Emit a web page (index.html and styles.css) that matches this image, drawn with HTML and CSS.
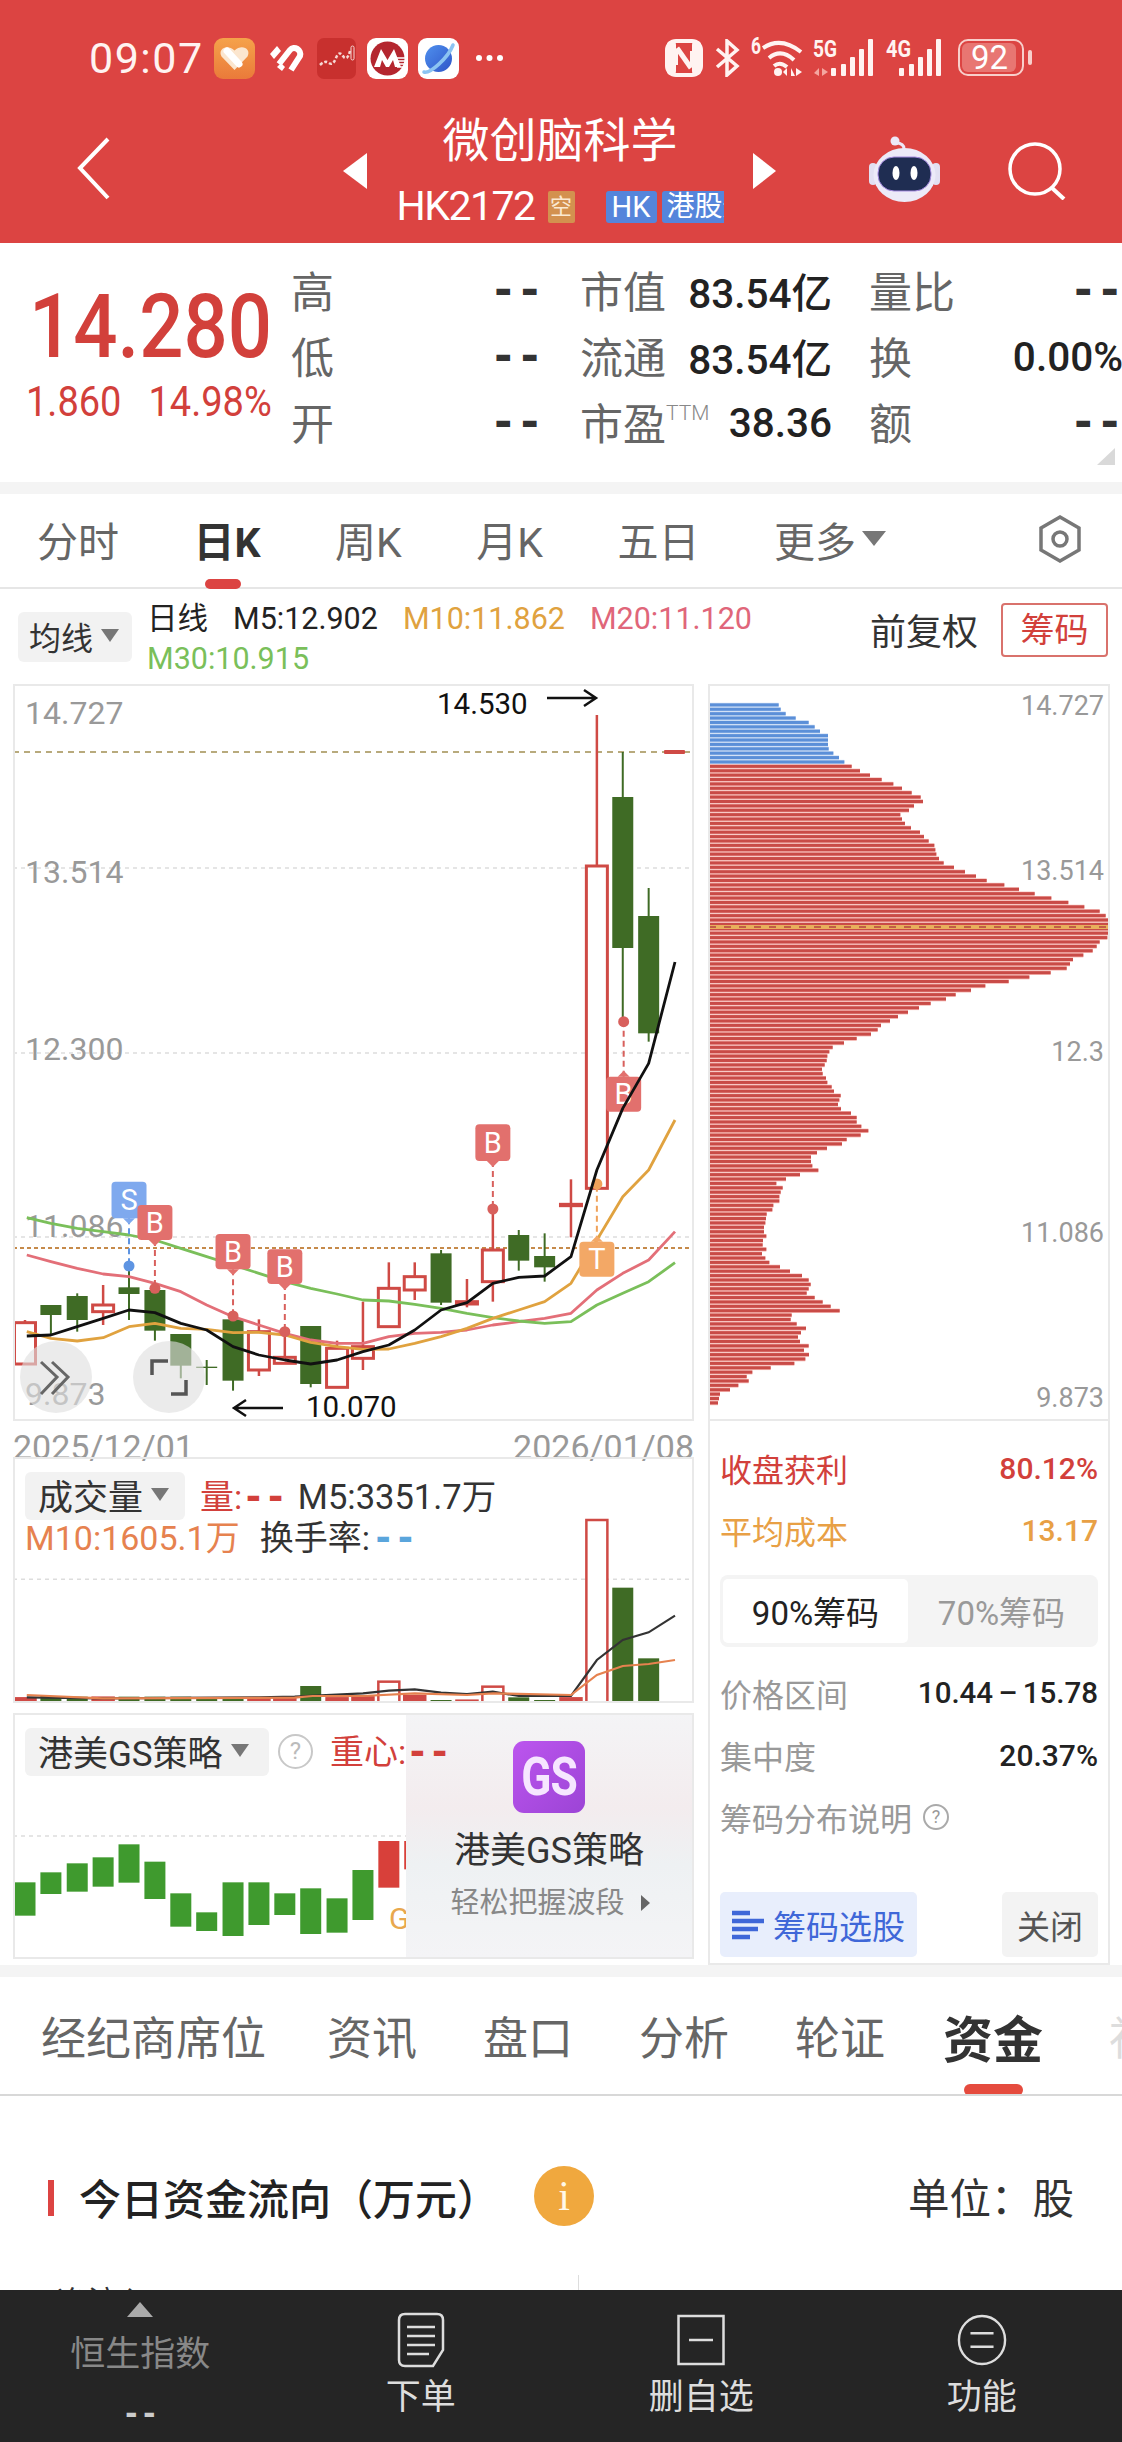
FILE: index.html
```html
<!DOCTYPE html>
<html lang="zh">
<head>
<meta charset="utf-8">
<title>微创脑科学</title>
<link rel="stylesheet" href="styles.css">
</head>
<body>
<div class="page">
  <header class="hero">
    <div class="status">
      <span class="time">09:07</span>
      <svg class="tile t1" viewBox="0 0 41 41"><defs><linearGradient id="og" x1="0" y1="0" x2="0" y2="1"><stop offset="0" stop-color="#F5A24A"/><stop offset="1" stop-color="#EA7A3A"/></linearGradient></defs><rect width="41" height="41" rx="9" fill="url(#og)"/><path d="M20.5 32L7.5 18.500C3.500 11 13 5.500 20.500 12.500C28 5.500 37.500 11 33.500 18.500Z" fill="#FBE6CF"/><path d="M13 13L25 26" stroke="#fff" stroke-width="7" stroke-linecap="round"/></svg>
      <svg class="logo2" viewBox="0 0 36 30"><path d="M2 11L9 3L13 8L6 16Z" fill="#fff"/><path d="M11 21L22 7C26 2 34 7 32 13L23 27" fill="none" stroke="#fff" stroke-width="6"/><path d="M9 24L13 20L17 24L14 28Z" fill="#fff"/></svg>
      <svg class="tile t3" viewBox="0 0 39 41"><rect width="39" height="41" rx="7" fill="#C8302E"/><path d="M3 27Q8 22 12 25T19 20T26 18T33 13" fill="none" stroke="#F6D8D4" stroke-width="2.500" stroke-dasharray="3 2"/><rect x="34" y="8" width="3" height="14" rx="1.500" fill="none" stroke="#F6D8D4"/></svg>
      <svg class="tile t4" viewBox="0 0 41 41"><rect width="41" height="41" rx="9" fill="#fff"/><circle cx="20.500" cy="20.500" r="17" fill="#B4262F"/><path d="M7 29L14 11L20.500 22L27 11L34 29H28L26 22L22 29H19L15 22L13 29Z" fill="#fff"/><path d="M30 20H39M30 23H39M30 26H38M30 29H37" stroke="#fff" stroke-width="1.500"/></svg>
      <svg class="tile t5" viewBox="0 0 41 41"><defs><linearGradient id="bg" x1="0" y1="0" x2="1" y2="1"><stop offset="0" stop-color="#4F90EE"/><stop offset="1" stop-color="#2F55C8"/></linearGradient></defs><rect width="41" height="41" rx="9" fill="#fff"/><circle cx="20.500" cy="20.500" r="13.500" fill="url(#bg)"/><path d="M6 34C12 36 30 20 35 7" fill="none" stroke="#8CC4F2" stroke-width="3.500" stroke-linecap="round"/></svg>
      <svg class="dots" viewBox="0 0 29 8"><circle cx="4" cy="4" r="3" fill="#fff"/><circle cx="14.500" cy="4" r="3" fill="#fff"/><circle cx="25" cy="4" r="3" fill="#fff"/></svg>
      <div class="status-right">
        <svg class="nfc" viewBox="0 0 38 38"><rect x="2" y="2" width="34" height="34" rx="9" fill="none" stroke="#FFF3F1" stroke-width="4"/><rect x="2" y="2" width="9" height="34" rx="4" fill="#FFF3F1"/><rect x="27" y="2" width="9" height="34" rx="4" fill="#FFF3F1"/><path d="M12 9L26 29" stroke="#FFF3F1" stroke-width="5"/><path d="M12 11V26M26 12V27" stroke="#FFF3F1" stroke-width="2"/></svg>
        <svg class="bt" viewBox="0 0 25 38"><path d="M2 10L22 27L12 36V2L22 11L2 28" fill="none" stroke="#FFF3F1" stroke-width="3.500"/></svg>
        <svg class="wifi" viewBox="0 0 52 39"><text class="sig-txt" x="0" y="17" textLength="10" lengthAdjust="spacingAndGlyphs">6</text><path d="M12 11Q30 -1 50 15M18 21Q30 11 43 23M23 29Q29 24 36 30" fill="none" stroke="#FFF3F1" stroke-width="4"/><circle cx="27" cy="35" r="4" fill="#FFF3F1"/><path d="M36 39V31L32 35ZM40 31L44 39H40ZM45 31V39L51 35Z" fill="#FFF3F1"/></svg>
        <svg class="sig s5" viewBox="0 0 61 39"><text class="sig-txt" x="0" y="19" textLength="24" lengthAdjust="spacingAndGlyphs">5G</text><path d="M1 35L6 30V38ZM9 30V38L15 34Z" fill="#F4A6A0"/><rect x="18" y="30" width="5" height="8" rx="1" fill="#FFF3F1"/><rect x="28" y="26" width="5" height="12" rx="1" fill="#FFF3F1"/><rect x="37" y="19" width="5" height="19" rx="1" fill="#FFF3F1"/><rect x="46" y="11" width="5" height="27" rx="1" fill="#FFF3F1"/><rect x="55" y="1" width="5" height="37" rx="1" fill="#FFF3F1"/></svg>
        <svg class="sig s4" viewBox="0 0 56 39"><text class="sig-txt" x="0" y="19" textLength="25" lengthAdjust="spacingAndGlyphs">4G</text><rect x="13" y="30" width="5" height="8" rx="1" fill="#FFF3F1"/><rect x="23" y="26" width="5" height="12" rx="1" fill="#FFF3F1"/><rect x="32" y="19" width="5" height="19" rx="1" fill="#FFF3F1"/><rect x="41" y="11" width="5" height="27" rx="1" fill="#FFF3F1"/><rect x="50" y="1" width="5" height="37" rx="1" fill="#FFF3F1"/></svg>
        <svg class="batt" viewBox="0 0 74 37"><rect x="1" y="1" width="64" height="35" rx="9" fill="none" stroke="#F8CFCB" stroke-width="2"/><rect x="4" y="4" width="54" height="29" rx="6" fill="#E87672"/><text class="batt-txt" x="13" y="30" textLength="37" lengthAdjust="spacingAndGlyphs">92</text><rect x="70" y="11" width="4" height="15" rx="2" fill="#F8CFCB"/></svg>
      </div>
    </div>
    <div class="nav">
      <svg class="back" viewBox="0 0 34 63"><path d="M31 2L3 31L31 61" fill="none" stroke="#fff" stroke-width="4"/></svg>
      <span class="tri tri-l"></span>
      <div class="nav-center">
        <div class="nav-title">微创脑科学</div>
        <div class="nav-sub"><span class="code">HK2172</span><span class="tag-k">空</span><span class="tag-hk">HK</span><span class="tag-gg">港股通</span></div>
      </div>
      <span class="tri tri-r"></span>
      <svg class="robot" viewBox="0 0 71 67"><path d="M35 14C35 9 31 8 27 8" fill="none" stroke="#EDE8F8" stroke-width="3"/><circle cx="26" cy="6" r="4.500" fill="#EDE8F8"/><rect x="0" y="28" width="8" height="22" rx="4" fill="#E2E0F2"/><rect x="63" y="28" width="8" height="22" rx="4" fill="#E2E0F2"/><ellipse cx="35.500" cy="40" rx="31" ry="27" fill="#ECEAF8"/><rect x="9" y="22" width="53" height="34" rx="16" fill="#1F2D52" stroke="#A58BE0" stroke-width="1"/><ellipse cx="27" cy="38" rx="3.500" ry="7" fill="#fff"/><ellipse cx="45" cy="38" rx="3.500" ry="7" fill="#fff"/></svg>
      <svg class="search" viewBox="0 0 58 58"><circle cx="27" cy="27" r="25" fill="none" stroke="#fff" stroke-width="3.500"/><path d="M44 46L56 57" stroke="#fff" stroke-width="4"/></svg>
    </div>
  </header>

  <section class="quote">
    <div class="price-block">
      <div class="price"><span>14.280</span></div>
      <div class="change"><span>1.860</span><span>14.98%</span></div>
    </div>
    <div class="q-col c1">
      <div class="q-row"><span class="q-l">高</span><span class="q-v dash">--</span></div>
      <div class="q-row"><span class="q-l">低</span><span class="q-v dash">--</span></div>
      <div class="q-row"><span class="q-l">开</span><span class="q-v dash">--</span></div>
    </div>
    <div class="q-col c2">
      <div class="q-row"><span class="q-l">市值</span><span class="q-v">83.54亿</span></div>
      <div class="q-row"><span class="q-l">流通</span><span class="q-v">83.54亿</span></div>
      <div class="q-row"><span class="q-l">市盈<sup class="ttm">TTM</sup></span><span class="q-v">38.36</span></div>
    </div>
    <div class="q-col c3">
      <div class="q-row"><span class="q-l">量比</span><span class="q-v dash">--</span></div>
      <div class="q-row"><span class="q-l">换</span><span class="q-v over">0.00%</span></div>
      <div class="q-row"><span class="q-l">额</span><span class="q-v dash">--</span></div>
    </div>
    <span class="corner"></span>
  </section>
  <div class="strip"></div>

  <nav class="periods">
    <span class="period">分时</span>
    <span class="period active">日K</span>
    <span class="period">周K</span>
    <span class="period">月K</span>
    <span class="period">五日</span>
    <span class="period">更多<i class="caret"></i></span>
    <svg class="gear" viewBox="0 0 52 52"><path d="M26 4L45 15V37L26 48L7 37V15Z" fill="none" stroke="#777" stroke-width="3.500"/><circle cx="26" cy="26" r="7" fill="none" stroke="#777" stroke-width="3.500"/></svg>
  </nav>

  <div class="ma-row">
    <div class="select ma-sel">均线<i class="caret"></i></div>
    <div class="legend">
      <span class="leg-k">日线</span>
      <span class="leg-k">M5:12.902</span>
      <span class="leg-o">M10:11.862</span>
      <span class="leg-p">M20:11.120</span>
      <span class="leg-g">M30:10.915</span>
    </div>
    <span class="fq">前复权</span>
    <span class="chip-btn">筹码</span>
  </div>

  <div class="panels">
    <div class="left-col">
      <div class="frame main-chart"><svg id="main" viewBox="13 684 681 737"></svg></div>
      <div class="dates"><span>2025/12/01</span><span>2026/01/08</span></div>
      <div class="frame vol">
        <svg id="vol" viewBox="13 1457 681 246"></svg>
        <div class="ind-head">
          <div class="select vol-sel">成交量<i class="caret"></i></div>
          <span class="c-red">量:<b class="d-in">--</b></span>
          <span class="c-dark m5">M5:3351.7万</span>
        </div>
        <div class="ind-sub"><span class="c-orange">M10:1605.1万</span><span class="c-dark hs">换手率:<b class="d-in c-blue">--</b></span></div>
      </div>
      <div class="frame gs">
        <svg id="gs" viewBox="13 1713 681 246"></svg>
        <div class="gs-over">
          <div class="gs-icon"><span>GS</span></div>
          <div class="gs-name">港美GS策略</div>
          <div class="gs-desc">轻松把握波段<i class="mini-tri"></i></div>
        </div>
        <div class="ind-head gs-head">
          <div class="select gs-sel">港美GS策略<i class="caret"></i></div>
          <span class="qm">?</span>
          <span class="c-red">重心:<b class="d-in">--</b></span>
        </div>
      </div>
    </div>
    <div class="right-col">
      <div class="frame chips-chart"><svg id="chips" viewBox="708 684 402 737"></svg></div>
      <div class="chips-info">
        <div class="ci-row c-red"><span>收盘获利</span><b>80.12%</b></div>
        <div class="ci-row c-amber"><span>平均成本</span><b>13.17</b></div>
        <div class="toggle"><span class="tg on">90%筹码</span><span class="tg">70%筹码</span></div>
        <div class="ci-row"><span class="c-gray">价格区间</span><b class="range">10.44 – 15.78</b></div>
        <div class="ci-row"><span class="c-gray">集中度</span><b>20.37%</b></div>
        <div class="ci-row start"><span class="c-gray">筹码分布说明</span><span class="qm small">?</span></div>
        <div class="ci-actions">
          <span class="pick"><svg class="pick-ic" viewBox="0 0 32 30"><path d="M0 3H18M0 11H32M0 19H26M0 27H18" stroke="#3F67D8" stroke-width="4.500"/></svg>筹码选股</span>
          <span class="close">关闭</span>
        </div>
      </div>
    </div>
  </div>
  <div class="strip low"></div>

  <nav class="info-tabs">
    <span class="first">经纪商席位</span><span>资讯</span><span>盘口</span><span>分析</span><span>轮证</span><span class="active">资金</span><span class="fade">社区</span>
  </nav>

  <main class="flow">
    <div class="sec-title">
      <i class="sec-bar"></i>
      <h2>今日资金流向（万元）</h2>
      <span class="info-i">i</span>
      <span class="unit">单位：股</span>
    </div>
    <div class="cut-row"><span class="cut-l">净流入</span><i class="cut-v"></i></div>
  </main>

  <footer class="bar">
    <div class="bar-item idx"><i class="up"></i><span class="idx-name">恒生指数</span><span class="idx-val">--</span></div>
    <div class="bar-item"><svg class="bar-ic" viewBox="0 0 48 56"><path d="M8 2H40Q46 2 46 8V38L36 54H8Q2 54 2 48V8Q2 2 8 2Z" fill="none" stroke="#ddd" stroke-width="2.500"/><path d="M10 15H38M10 24H38M10 33H38M10 42H32" stroke="#ddd" stroke-width="2.500"/></svg><span>下单</span></div>
    <div class="bar-item"><svg class="bar-ic" viewBox="0 0 48 56"><rect x="1.500" y="4" width="45" height="48" fill="none" stroke="#ddd" stroke-width="2.500"/><path d="M12 28H36" stroke="#ddd" stroke-width="2.500"/></svg><span>删自选</span></div>
    <div class="bar-item"><svg class="bar-ic" viewBox="0 0 52 56"><ellipse cx="26" cy="28" rx="24" ry="25" fill="none" stroke="#ddd" stroke-width="2.500"/><path d="M14 21H38M14 35H38" stroke="#ddd" stroke-width="2.500"/></svg><span>功能</span></div>
  </footer>
</div>
<script src="app.js"></script>
</body>
</html>
```

FILE: styles.css
```css
* { box-sizing: border-box; }
html, body { margin: 0; padding: 0; background: #fff; }
body { font-family: Roboto, "Noto Sans CJK SC", sans-serif; color: #222; }
i { font-style: normal; }
.page { width: 1122px; height: 2442px; overflow: hidden; display: flex; flex-direction: column; position: relative; }

/* header */
.hero { height: 243px; background: #DC4442; color: #fff; flex: none; }
.status { height: 118px; display: flex; align-items: flex-start; padding: 38px 90px 0 89px; }
.time { font-size: 43px; line-height: 41px; width: 114px; letter-spacing: 1.500px; color: #FFF3F1; }
.tile { width: 41px; height: 41px; display: block; flex: none; }
.t1 { margin-left: 11px; }
.logo2 { width: 36px; height: 30px; margin: 5px 0 0 13px; flex: none; }
.t3 { width: 39px; margin-left: 13px; }
.t4 { margin-left: 11px; }
.t5 { margin-left: 10px; }
.dots { width: 29px; height: 8px; margin: 16px 0 0 16px; }
.status-right { margin-left: auto; display: flex; align-items: flex-start; margin-top: -1px; }
.nfc { width: 38px; height: 38px; margin-top: 2px; }
.bt { width: 25px; height: 38px; margin: 2px 0 0 12px; }
.wifi { width: 52px; height: 39px; margin-left: 11px; overflow: visible; }
.sig { height: 39px; overflow: visible; margin-top: 1px; }
.s5 { width: 61px; margin-left: 10px; }
.s4 { width: 56px; margin-left: 12px; }
.sig-txt { font: 700 24px Roboto, sans-serif; fill: #FFF3F1; }
.batt { width: 74px; height: 37px; margin: 2px 0 0 16px; }
.batt-txt { font: 400 34px Roboto, sans-serif; fill: #fff; text-anchor: start; }
.nav { height: 125px; display: flex; align-items: flex-start; padding-left: 77px; }
.back { width: 34px; height: 63px; margin-top: 19px; flex: none; }
.tri { width: 0; height: 0; border-top: 18px solid transparent; border-bottom: 18px solid transparent; margin-top: 35px; flex: none; }
.tri-l { border-right: 24px solid #fff; margin-left: 232px; }
.tri-r { border-left: 23px solid #fff; }
.nav-center { width: 386px; display: flex; flex-direction: column; align-items: center; }
.nav-title { font-size: 47px; line-height: 46px; white-space: nowrap; }
.nav-sub { display: flex; align-items: center; margin-top: 26px; height: 33px; }
.code { font-size: 41px; line-height: 33px; letter-spacing: -1.500px; width: 151px; }
.tag-k { width: 27px; height: 32px; background: #D3914F; font-size: 22px; line-height: 32px; text-align: center; border-radius: 2px; color: #FBE9D2; }
.tag-hk { width: 51px; height: 32px; margin-left: 31px; background: #5585DB; font-size: 29px; line-height: 32px; text-align: center; border-radius: 3px; }
.tag-gg { width: 62px; height: 32px; margin-left: 5px; background: #5585DB; font-size: 28px; line-height: 32px; white-space: nowrap; overflow: hidden; padding-left: 5px; border-radius: 3px 0 0 3px; }
.robot { width: 71px; height: 67px; margin: 17px 0 0 93px; flex: none; }
.search { width: 58px; height: 58px; margin: 24px 0 0 68px; flex: none; }

/* quote */
.quote { height: 239px; flex: none; display: flex; position: relative; padding-top: 13px; }
.price-block { width: 292px; flex: none; }
.price { height: 106px; padding: 36px 0 0 29px; color: #D2403B; }
.price span { display: block; width: 270px; font-size: 89px; line-height: 70px; font-weight: 500; transform: scaleX(.875); transform-origin: left center; }
.change { display: flex; gap: 27px; padding-left: 26px; color: #D2403B; font-size: 38px; line-height: 40px; margin-top: 20px; }
.change span { display: block; transform: scaleY(1.1); }
.q-col { display: flex; flex-direction: column; }
.c1 { width: 248px; }
.c2 { width: 249px; margin-left: 41px; }
.c3 { width: 250px; margin-left: 40px; }
.q-row { height: 66px; display: flex; justify-content: space-between; align-items: center; }
.q-l { font-size: 43px; color: #666; white-space: nowrap; position: relative; margin-left: -1px; }
.q-v { font-size: 40.500px; font-weight: 500; color: #222; white-space: nowrap; margin-top: 3px; margin-right: -2px; }
.q-v.dash { font-family: "DejaVu Sans Mono", monospace; font-size: 44px; font-weight: 700; margin-top: 0; margin-right: -3px; color: #333; }
.q-v.over { margin-right: -3px; }
.ttm { font-size: 21px; color: #888; font-weight: 300; vertical-align: 20px; line-height: 0; }
.corner { position: absolute; right: 7px; bottom: 17px; width: 0; height: 0; border-left: 18px solid transparent; border-bottom: 17px solid #D9D9D9; }
.strip { height: 12px; background: #F4F4F4; flex: none; }

/* periods */
.periods { height: 95px; flex: none; display: flex; align-items: center; gap: 74.500px; padding: 0 36px 4px 37px; border-bottom: 2px solid #E6E6E6; position: relative; }
.period { font-size: 41px; color: #666; position: relative; display: flex; align-items: center; white-space: nowrap; }
.period.active { font-weight: 700; color: #333; }
.period.active::after { content: ""; position: absolute; left: 11px; top: 70px; width: 36px; height: 10px; border-radius: 5px; background: #DC4442; }
.period .caret { border-left-width: 12px; border-right-width: 12px; border-top-width: 15px; margin-left: 6px; }
.caret { display: inline-block; width: 0; height: 0; border-left: 9px solid transparent; border-right: 9px solid transparent; border-top: 13px solid #777; margin-left: 8px; }
.gear { width: 52px; height: 52px; margin-left: auto; flex: none; }

/* ma */
.ma-row { height: 95px; flex: none; display: flex; align-items: flex-start; padding: 10px 10px 0 18px; }
.select { display: flex; align-items: center; background: #F2F2F2; border-radius: 6px; color: #333; white-space: nowrap; flex: none; padding-bottom: 3px; }
.ma-sel { width: 114px; height: 50px; margin-top: 13px; padding-left: 11px; font-size: 32px; }
.legend { width: 640px; margin-left: 15px; display: flex; flex-wrap: wrap; column-gap: 25px; font-size: 30.500px; line-height: 40px; flex: none; }
.leg-k { color: #222; }
.leg-o { color: #E0A23F; }
.leg-p { color: #E0667A; }
.leg-g { color: #7ABF5A; }
.fq { font-size: 36px; line-height: 46px; margin-top: 11px; margin-left: 83px; color: #333; white-space: nowrap; }
.chip-btn { width: 107px; height: 54px; margin-left: 23px; margin-top: 4px; border: 2px solid #D9726C; border-radius: 4px; color: #D2403B; font-size: 34px; line-height: 50px; text-align: center; flex: none; }

/* panels */
.panels { display: flex; flex: none; padding-left: 13px; height: 1281px; }
.left-col { width: 681px; flex: none; }
.right-col { width: 402px; margin-left: 14px; flex: none; display: flex; flex-direction: column; }
.frame { border: 2px solid #E9E9E9; position: relative; overflow: hidden; }
.frame svg { display: block; width: calc(100% + 4px); height: calc(100% + 4px); position: absolute; left: -2px; top: -2px; }
.main-chart { height: 737px; }
.chips-chart { height: 737px; }
.dates { height: 36px; display: flex; justify-content: space-between; align-items: center; font-size: 34px; color: #999; padding-top: 15px; white-space: nowrap; }
.vol { height: 246px; }
.gs { height: 246px; margin-top: 10px; }
.ind-head { position: relative; display: flex; align-items: center; padding: 10px 0 0 10px; font-size: 34px; white-space: nowrap; }
.ind-head > span:not(.qm) { margin-bottom: 4px; }
.vol-sel { width: 160px; height: 48px; padding-left: 13px; font-size: 35px; margin-right: 15px; }
.d-in { font-family: "DejaVu Sans Mono", monospace; font-weight: 700; font-size: 37px; }
.c-red { color: #D2403B; }
.c-dark { color: #333; }
.c-orange { color: #E6824F; }
.c-blue { color: #5AA5DC; margin-left: 2px; }
.c-amber { color: #E8A045; }
.c-gray { color: #999; }
.m5 { margin-left: 11px; font-size: 34.500px; }
.ind-sub { position: relative; padding-left: 10px; font-size: 34px; line-height: 30px; white-space: nowrap; }
.hs { margin-left: 20px; }
.gs-head { z-index: 2; }
.gs-sel { width: 244px; height: 48px; padding-left: 13px; font-size: 35px; }
.qm { width: 35px; height: 35px; margin: 0 17px 0 9px; border: 2px solid #C8C8C8; border-radius: 50%; color: #BBB; font-size: 24px; line-height: 31px; text-align: center; flex: none; }
.gs-over { position: absolute; right: 0; top: 0; bottom: 0; width: 286px; background: linear-gradient(180deg,#F4F4F6 0,#F3ECEE 38%,#EEF1F3 62%,#F4F4F6 100%); display: flex; flex-direction: column; align-items: center; z-index: 1; }
.gs-icon { width: 72px; height: 72px; margin-top: 26px; border-radius: 11px; background: linear-gradient(135deg,#BC55EE,#9C44D6); color: #F6E6FF; line-height: 72px; font-weight: 700; text-align: center; }
.gs-icon span { display: inline-block; font-size: 54px; transform: scaleX(.82); letter-spacing: -1px; }
.gs-name { font-size: 36px; line-height: 42px; margin-top: 17px; color: #333; white-space: nowrap; }
.gs-desc { font-size: 29px; line-height: 34px; margin-top: 14px; color: #888; display: flex; align-items: center; white-space: nowrap; margin-left: 2px; }
.mini-tri { width: 0; height: 0; margin-left: 16px; border-top: 8px solid transparent; border-bottom: 8px solid transparent; border-left: 9px solid #666; }

/* chips info */
.chips-info { flex: 1; border: 2px solid #E9E9E9; border-top: 0; padding: 16px 10px 0 10px; height: 544px; }
.ci-row { height: 62px; display: flex; justify-content: space-between; align-items: center; font-size: 32px; white-space: nowrap; }
.ci-row b { font-weight: 500; font-size: 30px; }
.ci-row b.range { word-spacing: -2px; font-size: 29.500px; }
.ci-row.start { justify-content: flex-start; }
.qm.small { width: 26px; height: 26px; font-size: 18px; line-height: 22px; margin: 0 0 0 11px; border-color: #AAA; color: #999; }
.toggle { height: 72px; margin: 14px 0 15px; background: #F4F4F4; border-radius: 8px; padding: 4px 3px; display: flex; font-size: 33px; color: #999; }
.tg { flex: 1; display: flex; align-items: center; justify-content: center; white-space: nowrap; }
.tg.on { flex: none; width: 185px; background: #fff; border-radius: 5px; color: #222; }
.ci-actions { margin-top: 44px; display: flex; justify-content: space-between; height: 65px; }
.pick { width: 197px; background: #E8EEFC; border-radius: 5px; color: #3F67D8; font-size: 33px; display: flex; align-items: center; padding-left: 12px; white-space: nowrap; }
.pick-ic { width: 32px; height: 30px; margin-right: 9px; flex: none; }
.close { width: 96px; background: #F3F3F3; border-radius: 5px; color: #555; font-size: 33px; display: flex; align-items: center; justify-content: center; }

/* info tabs */
.info-tabs { height: 119px; flex: none; display: flex; align-items: center; padding: 0 0 0 41px; gap: 66px; font-size: 45px; color: #666; white-space: nowrap; border-bottom: 2px solid #D8D8D8; position: relative; overflow: hidden; }
.info-tabs span { flex: none; }
.info-tabs .first { margin-right: -5px; }
.info-tabs .active { font-size: 50px; font-weight: 700; color: #333; position: relative; margin-left: -8px; }
.info-tabs .active::after { content: ""; position: absolute; left: 21px; top: 84px; width: 59px; height: 12px; background: #E54B3E; border-radius: 6px; }
.info-tabs .fade { color: #DDD; }

/* flow */
.flow { flex: 1; min-height: 0; overflow: hidden; padding-top: 70px; }
.sec-title { height: 60px; display: flex; align-items: center; padding: 0 48px; }
.sec-bar { width: 6px; height: 36px; background: #DC4442; flex: none; margin-top: 4px; }
h2 { margin: 0 0 0 25px; font-size: 42px; font-weight: 500; color: #222; white-space: nowrap; }
.info-i { width: 60px; height: 60px; margin-left: 35px; border-radius: 50%; background: #F0A83E; color: #FFF8E8; font: 400 42px/60px "Liberation Serif", serif; text-align: center; flex: none; }
.unit { margin-left: auto; font-size: 41.500px; color: #333; white-space: nowrap; }
.cut-row { margin-top: 49px; display: flex; padding-left: 57px; position: relative; }
.cut-l { font-size: 31px; line-height: 40px; margin-top: 8px; color: #333; }
.cut-v { position: absolute; left: 578px; top: 0; width: 1px; height: 40px; background: #DDD; }

/* bottom */
.bar { height: 152px; flex: none; background: #252525; display: grid; grid-template-columns: repeat(4, 1fr); color: #DDD; font-size: 35px; }
.bar-item { display: flex; flex-direction: column; align-items: center; padding-top: 22px; position: relative; white-space: nowrap; }
.bar-ic { width: 50px; height: 56px; flex: none; }
.bar-item span { line-height: 40px; margin-top: 10px; }
.up { width: 0; height: 0; border-left: 13px solid transparent; border-right: 13px solid transparent; border-bottom: 15px solid #AAA; margin-top: -10px; }
.idx .idx-name { font-size: 35px; color: #888; margin-top: 18px; line-height: 40px; }
.idx .idx-val { font-family: "DejaVu Sans Mono", monospace; font-weight: 700; color: #CCC; font-size: 30px; line-height: 30px; margin-top: 24px; }
```

FILE: app.js
```js
const NS = 'http://www.w3.org/2000/svg';
function el(parent, tag, attrs, text) {
  const n = document.createElementNS(NS, tag);
  for (const k in attrs) n.setAttribute(k, attrs[k]);
  if (text !== undefined) n.textContent = text;
  parent.appendChild(n);
  return n;
}
const RED = '#CF4A45', GREEN = '#3F6B25', FONT = 'Roboto, sans-serif';

/* ---------- main candlestick ---------- */
(function () {
  const s = document.getElementById('main');
  const X = z => z / 2.24, Y = z => z / 3 + 980;
  const grid = [868, 1053, 1237];
  grid.forEach(y => el(s, 'line', { x1: 13, x2: 693, y1: y, y2: y, stroke: '#DDD', 'stroke-width': 1.5, 'stroke-dasharray': '4 4' }));
  [['14.727', 724], ['13.514', 883], ['12.300', 1060], ['11.086', 1237], ['9.873', 1405]].forEach(l =>
    el(s, 'text', { x: 25, y: l[1], fill: '#999', 'font-size': 32, 'font-family': FONT }, l[0]));
  el(s, 'line', { x1: 13, x2: 693, y1: 752, y2: 752, stroke: '#B8AA7C', 'stroke-width': 2, 'stroke-dasharray': '6 5' });
  el(s, 'line', { x1: 13, x2: 693, y1: 1248, y2: 1248, stroke: '#C68A4A', 'stroke-width': 2, 'stroke-dasharray': '4 3' });
  el(s, 'rect', { x: 664, y: 750, width: 21, height: 4, fill: RED, rx: 1 });

  const c = [
    [56, 1028, 1152, 1020, 1152, 'r'], [114, 975, 1005, 975, 1068, 'g'], [173, 948, 1020, 940, 1055, 'g'],
    [231, 975, 995, 915, 1035, 'r'], [289, 922, 942, 860, 1020, 'g'], [347, 930, 1052, 930, 1082, 'g'],
    [405, 1062, 1157, 1062, 1195, 'g'], [463, 1160, 1164, 1140, 1215, 'g'], [522, 1018, 1202, 1018, 1232, 'g'],
    [580, 1055, 1170, 1018, 1188, 'r'], [638, 1132, 1150, 1055, 1150, 'r'], [696, 1038, 1212, 1038, 1222, 'g'],
    [755, 1105, 1222, 1082, 1222, 'r'], [813, 1100, 1135, 965, 1170, 'r'], [871, 925, 1040, 847, 1040, 'r'],
    [929, 890, 930, 847, 960, 'r'], [988, 820, 968, 810, 975, 'g'], [1046, 965, 972, 897, 982, 'r'],
    [1104, 810, 905, 690, 965, 'r'], [1162, 765, 842, 750, 872, 'g'], [1220, 828, 862, 760, 905, 'g'],
    [1279, 673, 677, 598, 772, 'r'], [1337, -342, 625, -795, 625, 'r'], [1395, -549, -96, -684, 125, 'g'],
    [1453, -192, 160, -276, 185, 'g']
  ];
  c.forEach(k => {
    const x = X(k[0]), col = k[5] === 'r' ? RED : GREEN;
    el(s, 'line', { x1: x, x2: x, y1: Y(k[3]), y2: Y(k[4]), stroke: col, 'stroke-width': k[5] === 'r' ? 2.5 : 2 });
    const h = Y(k[2]) - Y(k[1]);
    if (k[5] === 'r') el(s, 'rect', { x: x - 10.5, y: Y(k[1]), width: 21, height: h, fill: h < 4 ? RED : '#fff', stroke: RED, 'stroke-width': 3 });
    else el(s, 'rect', { x: x - 10.5, y: Y(k[1]), width: 21, height: h, fill: col });
  });

  const xs = [60, 114, 173, 231, 289, 347, 405, 463, 522, 580, 638, 696, 755, 813, 871, 929, 988, 1046, 1104, 1162, 1220, 1279, 1337, 1395, 1453, 1512];
  const poly = (ys, col) => el(s, 'polyline', { points: ys.map((y, i) => X(xs[i]) + ',' + Y(y)).join(' '), fill: 'none', stroke: col, 'stroke-width': 2.8, 'stroke-linejoin': 'round' });
  const m30 = [713, 730, 745, 755, 765, 780, 805, 830, 855, 880, 905, 925, 942, 960, 963, 973, 985, 1000, 1013, 1023, 1030, 1025, 975, 940, 905, 848];
  const m20 = [825, 845, 865, 882, 890, 910, 935, 975, 1010, 1035, 1060, 1080, 1090, 1090, 1070, 1060, 1057, 1050, 1035, 1025, 1015, 1000, 930, 880, 840, 755];
  const m10 = [1055, 1075, 1083, 1073, 1040, 1030, 1045, 1048, 1058, 1057, 1065, 1087, 1100, 1108, 1107, 1090, 1070, 1045, 1015, 990, 965, 910, 780, 650, 570, 420];
  const m5 = [1068, 1065, 1040, 1015, 990, 998, 1030, 1050, 1100, 1125, 1140, 1152, 1140, 1115, 1095, 1050, 990, 968, 910, 892, 888, 830, 570, 385, 250, -54];
  poly(m20, '#E36F78');
  poly(m30, '#7ABF5A');
  poly(m10, '#E0A23F');

  function tag(cx, top, bottom, letter, col, fill, dotY, up) {
    const x = X(cx), w = 35, t = Y(top), b = Y(bottom);
    const dashEnd = Y(dotY);
    el(s, 'line', { x1: x, x2: x, y1: up ? t : b, y2: dashEnd, stroke: col, 'stroke-width': 2, 'stroke-dasharray': '6 4' });
    el(s, 'circle', { cx: x, cy: dashEnd, r: 5.5, fill: col });
    if (up) el(s, 'path', { d: `M${x - 6} ${t}L${x} ${t - 6}L${x + 6} ${t}Z`, fill });
    else el(s, 'path', { d: `M${x - 6} ${b}L${x} ${b + 6}L${x + 6} ${b}Z`, fill });
    el(s, 'rect', { x: x - w / 2, y: t, width: w, height: b - t, rx: 4, fill });
    el(s, 'text', { x, y: (t + b) / 2 + 10, fill: '#fff', 'font-size': 29, 'text-anchor': 'middle', 'font-family': FONT }, letter);
  }
  const TR = '#E2706D';
  tag(289, 605, 715, 'S', '#5E94E2', '#7FA9EE', 858);
  tag(347, 675, 780, 'B', '#D8605C', TR, 925);
  tag(522, 762, 868, 'B', '#D8605C', TR, 1008);
  tag(638, 808, 912, 'B', '#D8605C', TR, 1055);
  tag(1104, 433, 543, 'B', '#D8605C', TR, 687);
  tag(1397, 290, 395, 'B', '#D8605C', TR, 125, true);
  tag(1337, 785, 890, 'T', '#EFA25A', '#F3A866', 612, true);
  poly(m5, '#111');

  el(s, 'text', { x: 437, y: 714, fill: '#111', 'font-size': 29.5, 'font-family': FONT }, '14.530');
  el(s, 'path', { d: 'M547 698H596M584 690L596 698L584 706', fill: 'none', stroke: '#111', 'stroke-width': 2.5 });
  el(s, 'text', { x: 306, y: 1417, fill: '#111', 'font-size': 29.5, 'font-family': FONT }, '10.070');
  el(s, 'path', { d: 'M283 1408H234M246 1400L234 1408L246 1416', fill: 'none', stroke: '#111', 'stroke-width': 2.5 });

  el(s, 'ellipse', { cx: 56, cy: 1377, rx: 36, ry: 36, fill: 'rgba(222,222,222,.62)' });
  el(s, 'path', { d: 'M41 1362L57 1377L41 1394M52 1362L68 1377L52 1394', fill: 'none', stroke: '#666', 'stroke-width': 3 });
  el(s, 'ellipse', { cx: 169, cy: 1377, rx: 36, ry: 36, fill: 'rgba(222,222,222,.62)' });
  el(s, 'path', { d: 'M152 1375V1361H168M186 1380V1394H171', fill: 'none', stroke: '#555', 'stroke-width': 3.5 });
})();

/* ---------- chip distribution ---------- */
(function () {
  const s = document.getElementById('chips');
  const w = [236, 242, 257, 287, 326, 344, 360, 384, 384, 384, 386, 400, 417, 433, 455, 480, 510, 545, 580, 606, 635, 662, 669, 642, 627, 601, 606, 615, 633, 660, 672, 686, 703, 706, 709, 717, 731, 762, 795, 828, 860, 913, 957, 1004, 1054, 1105, 1153, 1199, 1217, 1224, 1227, 1226, 1224, 1222, 1199, 1190, 1178, 1150, 1119, 1110, 1100, 1052, 988, 926, 856, 813, 767, 738, 692, 657, 624, 594, 570, 543, 533, 513, 470, 432, 398, 388, 382, 380, 374, 366, 368, 378, 382, 395, 402, 422, 418, 414, 423, 453, 470, 470, 484, 505, 482, 440, 426, 381, 351, 333, 333, 337, 355, 300, 258, 229, 248, 242, 238, 238, 220, 217, 200, 198, 196, 192, 192, 199, 189, 188, 199, 186, 196, 208, 240, 270, 306, 326, 332, 326, 320, 344, 368, 392, 419, 275, 272, 290, 318, 303, 294, 300, 326, 312, 327, 316, 283, 212, 157, 140, 146, 115, 90, 60, 57, 54];
  const P = 4.39, Y0 = 705;
  w.forEach((z, i) => {
    const y = Y0 + P * i, x2 = 700 + z / 3, blue = i < 14;
    el(s, 'rect', { x: 709, y: y - 2.2, width: x2 - 709, height: P, fill: blue ? '#C3D7F3' : '#F6B9B4' });
    el(s, 'rect', { x: 709, y: y - 1.6, width: x2 - 709, height: 3, fill: blue ? '#5B8FD8' : '#C94B47' });
  });
  el(s, 'rect', { x: 709, y: 925, width: 400, height: 4, fill: '#E8AF5C' });
  el(s, 'line', { x1: 709, x2: 1109, y1: 927, y2: 927, stroke: '#B5443F', 'stroke-width': 1.5, 'stroke-dasharray': '7 8' });
  [['14.727', 715], ['13.514', 880], ['12.3', 1061], ['11.086', 1242], ['9.873', 1407]].forEach(l =>
    el(s, 'text', { x: 1104, y: l[1], fill: '#999', 'font-size': 27, 'text-anchor': 'end', 'font-family': FONT }, l[0]));
})();

/* ---------- volume ---------- */
(function () {
  const s = document.getElementById('vol');
  const X = z => z / 2.24, Y = z => z / 3 + 1450;
  const B = 758;
  el(s, 'line', { x1: 13, x2: 693, y1: Y(388), y2: Y(388), stroke: '#DDD', 'stroke-width': 1.5, 'stroke-dasharray': '4 4' });
  const xs = [56, 114, 173, 231, 289, 347, 405, 463, 522, 580, 638, 696, 755, 813, 871, 929, 988, 1046, 1104, 1162, 1220, 1279, 1337, 1395, 1453];
  const tops = [745, 738, 740, 743, 740, 740, 740, 742, 742, 745, 745, 708, 745, 742, 695, 738, 750, 752, 710, 742, 750, 745, 210, 413, 625];
  const red = [1, 0, 0, 1, 0, 0, 0, 0, 0, 1, 1, 0, 1, 1, 1, 1, 0, 1, 1, 0, 0, 1, 1, 0, 0];
  xs.forEach((z, i) => {
    const x = X(z) - 10.5, t = Y(tops[i]), h = Y(B) - t;
    if (red[i]) el(s, 'rect', { x, y: t, width: 21, height: h, fill: h < 10 || i < 4 || i === 9 || i === 10 || i === 17 || i === 21 ? RED : '#fff', stroke: RED, 'stroke-width': 2.5 });
    else el(s, 'rect', { x, y: t, width: 21, height: h, fill: GREEN });
  });
  const line = (pts, col) => el(s, 'polyline', { points: pts.map(p => X(p[0]) + ',' + Y(p[1])).join(' '), fill: 'none', stroke: col, 'stroke-width': 2.2 });
  line([[60, 742], [230, 745], [580, 742], [660, 740], [813, 730], [871, 722], [929, 718], [988, 728], [1046, 732], [1104, 725], [1162, 738], [1279, 738], [1337, 630], [1395, 570], [1453, 547], [1512, 497]], '#333');
  line([[60, 735], [230, 745], [660, 743], [700, 738], [813, 738], [929, 730], [1046, 735], [1104, 730], [1279, 735], [1337, 675], [1395, 648], [1453, 642], [1512, 630]], '#E6824F');
})();

/* ---------- GS strategy ---------- */
(function () {
  const s = document.getElementById('gs');
  const X = z => z / 2.24, Y = z => z / 3 + 1450;
  el(s, 'line', { x1: 13, x2: 693, y1: Y(1158), y2: Y(1158), stroke: '#DDD', 'stroke-width': 1.5, 'stroke-dasharray': '4 4' });
  const b = [[56, 1297, 1397], [114, 1267, 1332], [173, 1240, 1325], [231, 1222, 1310], [289, 1183, 1298], [347, 1235, 1347], [405, 1330, 1430], [463, 1387, 1443], [522, 1297, 1458], [580, 1297, 1425], [638, 1330, 1395], [696, 1315, 1452], [755, 1345, 1448], [813, 1260, 1410], [871, 1173, 1313], [929, 1173, 1258]];
  b.forEach((k, i) => el(s, 'rect', { x: X(k[0]) - 10.5, y: Y(k[1]), width: 21, height: Y(k[2]) - Y(k[1]), fill: i < 14 ? '#3F9A2E' : '#D8403A' }));
  el(s, 'text', { x: 389, y: 1929, fill: '#E8A84E', 'font-size': 30, 'font-family': FONT }, 'G');
})();
```
